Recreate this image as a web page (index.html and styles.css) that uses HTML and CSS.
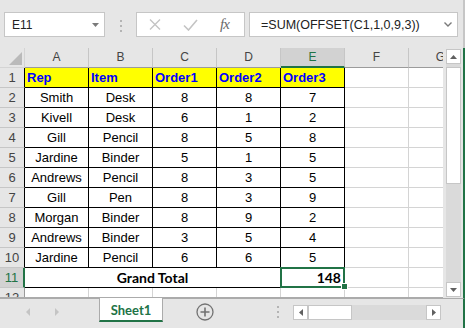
FILE: index.html
```html
<!DOCTYPE html>
<html lang="en">
<head>
  <meta charset="UTF-8" />
  <meta name="viewport" content="width=device-width, initial-scale=1.0" />
  <title>Sheet1</title>
  <link rel="stylesheet" href="styles.css">
</head>
<body>
  <div class="formula-row">
    <div class="name-box">
      <span>E11</span>
      <svg width="7" height="4" viewBox="0 0 7 4"><path d="M0 0h7L3.5 4z" fill="#7a7a7a"/></svg>
    </div>
    <div class="grip"><i></i><i></i><i></i></div>
    <div class="fx-buttons">
      <svg class="cancel" width="12" height="11" viewBox="0 0 12 11"><path d="M1 0.5l10 10M11 0.5l-10 10" stroke="#c4c4c4" stroke-width="1.4" fill="none"/></svg>
      <svg class="enter" width="15" height="12" viewBox="0 0 15 12"><path d="M1 6.5l4.5 4.5 8.5-10" stroke="#c4c4c4" stroke-width="1.6" fill="none"/></svg>
      <span class="fx">fx</span>
    </div>
    <div class="formula">
      <span>=SUM(OFFSET(C1,1,0,9,3))</span>
      <svg width="8" height="5" viewBox="0 0 8 5"><path d="M0.5 0.5l3.5 3.5 3.5-3.5" stroke="#7a7a7a" stroke-width="1.4" fill="none"/></svg>
    </div>
  </div>

  <div class="main">
    <div class="grid">
      <table class="sheet">
        <colgroup>
          <col class="col-rh"><col class="col"><col class="col"><col class="col"><col class="col"><col class="col"><col class="col"><col class="col">
        </colgroup>
        <thead>
          <tr>
            <th class="corner"><svg width="25" height="19" viewBox="0 0 25 19"><path d="M22 4v13H9z" fill="#bababa"/></svg></th>
            <th class="ch">A</th><th class="ch">B</th><th class="ch">C</th><th class="ch">D</th><th class="ch on">E</th><th class="ch">F</th><th class="ch">G</th>
          </tr>
        </thead>
        <tbody>
          <tr><th class="rh edge">1</th><td class="box hd">Rep</td><td class="box hd">Item</td><td class="box hd">Order1</td><td class="box hd">Order2</td><td class="box hd">Order3</td><td></td><td></td></tr>
          <tr><th class="rh edge">2</th><td class="box">Smith</td><td class="box">Desk</td><td class="box">8</td><td class="box">8</td><td class="box">7</td><td></td><td></td></tr>
          <tr><th class="rh edge">3</th><td class="box">Kivell</td><td class="box">Desk</td><td class="box">6</td><td class="box">1</td><td class="box">2</td><td></td><td></td></tr>
          <tr><th class="rh edge">4</th><td class="box">Gill</td><td class="box">Pencil</td><td class="box">8</td><td class="box">5</td><td class="box">8</td><td></td><td></td></tr>
          <tr><th class="rh edge">5</th><td class="box">Jardine</td><td class="box">Binder</td><td class="box">5</td><td class="box">1</td><td class="box">5</td><td></td><td></td></tr>
          <tr><th class="rh edge">6</th><td class="box">Andrews</td><td class="box">Pencil</td><td class="box">8</td><td class="box">3</td><td class="box">5</td><td></td><td></td></tr>
          <tr><th class="rh edge">7</th><td class="box">Gill</td><td class="box">Pen</td><td class="box">8</td><td class="box">3</td><td class="box">9</td><td></td><td></td></tr>
          <tr><th class="rh edge">8</th><td class="box">Morgan</td><td class="box">Binder</td><td class="box">8</td><td class="box">9</td><td class="box">2</td><td></td><td></td></tr>
          <tr><th class="rh edge">9</th><td class="box">Andrews</td><td class="box">Binder</td><td class="box">3</td><td class="box">5</td><td class="box">4</td><td></td><td></td></tr>
          <tr><th class="rh edge">10</th><td class="box">Jardine</td><td class="box">Pencil</td><td class="box">6</td><td class="box">6</td><td class="box">5</td><td></td><td></td></tr>
          <tr><th class="rh on">11</th><td class="box total" colspan="4">Grand Total</td><td class="box sum">148<span class="selection"></span><span class="handle"></span></td><td></td><td></td></tr>
          <tr><th class="rh">12</th><td></td><td></td><td></td><td></td><td></td><td></td><td></td></tr>
        </tbody>
      </table>
    </div>
    <div class="vscroll">
      <div class="sb-btn"><svg width="7" height="4" viewBox="0 0 7 4"><path d="M0 4h7L3.5 0z" fill="#606060"/></svg></div>
      <div class="sb-track"><div class="sb-thumb"></div></div>
      <div class="sb-btn"><svg width="7" height="4" viewBox="0 0 7 4"><path d="M0 0h7L3.5 4z" fill="#606060"/></svg></div>
    </div>
  </div>

  <div class="tabs">
    <svg class="tab-nav" width="99" height="29" viewBox="0 0 99 29">
      <path d="M30 9v8l-4-4z" fill="#c4c4c4"/>
      <path d="M55 9v8l4-4z" fill="#c4c4c4"/>
    </svg>
    <div class="tab">Sheet1</div>
    <svg class="tab-add" width="18" height="18" viewBox="0 0 18 18">
      <circle cx="9" cy="9" r="8" stroke="#737373" stroke-width="1.3" fill="none"/>
      <path d="M9 4.5v9M4.5 9h9" stroke="#737373" stroke-width="1.6"/>
    </svg>
    <div class="hgrip"><i></i><i></i><i></i></div>
    <div class="hscroll">
      <div class="sb-btn"><svg width="4" height="7" viewBox="0 0 4 7"><path d="M4 0v7L0 3.5z" fill="#606060"/></svg></div>
      <div class="sb-thumb-h"></div>
      <div class="sb-track-h"></div>
      <div class="sb-btn"><svg width="4" height="7" viewBox="0 0 4 7"><path d="M0 0v7l4-3.5z" fill="#606060"/></svg></div>
    </div>
  </div>
</body>
</html>
```

FILE: styles.css
```css
body {
  margin: 0;
  width: 465px;
  height: 328px;
  overflow: hidden;
  background: #e6e6e6;
  font-family: 'Liberation Sans', Arial, sans-serif;
  color: #000;
}

/* formula bar */

.formula-row {
  display: flex;
  align-items: flex-start;
  height: 48px;
  box-sizing: border-box;
  padding: 12px 0 0 4px;
  border-right: 2px solid #c6c6c6;
}

.name-box,
.fx-buttons,
.formula {
  box-sizing: border-box;
  height: 25px;
  background: #fff;
  border: 1px solid #c6c6c6;
  display: flex;
  align-items: center;
}

.name-box {
  width: 101px;
  justify-content: space-between;
  padding: 0 5px 0 7px;
  font-size: 12px;
  color: #222;
}

.grip {
  width: 31px;
  display: flex;
  flex-direction: column;
  align-items: center;
  gap: 3px;
  padding-top: 8px;
}

.grip i,
.hgrip i {
  display: block;
  width: 2px;
  height: 2px;
  background: #b4b4b4;
}

.fx-buttons {
  width: 109px;
  padding-left: 12px;
}

.fx-buttons .enter {
  margin-left: 22px;
}

.fx {
  margin-left: 22px;
  font-family: 'Liberation Serif', serif;
  font-style: italic;
  font-size: 15px;
  color: #6a6a6a;
  letter-spacing: -1px;
}

.formula {
  width: 209px;
  margin-left: 4px;
  justify-content: space-between;
  padding: 0 5px 0 11px;
  font-size: 12.5px;
  color: #222;
}

/* grid */

.main {
  display: flex;
  height: 250px;
  border-right: 2px solid #217346;
}

.grid {
  width: 443px;
  flex: none;
  overflow: hidden;
  background: #fff;
  border-bottom: 1px solid #ababab;
  box-sizing: border-box;
}

.sheet {
  border-collapse: separate;
  border-spacing: 0;
  table-layout: fixed;
  width: 473px;
  font-size: 13px;
}

.col-rh { width: 25px; }
.col { width: 64px; }

.sheet th,
.sheet td {
  padding: 0;
  height: 19px;
  line-height: 19px;
  border-right: 1px solid #d4d4d4;
  border-bottom: 1px solid #d4d4d4;
  white-space: nowrap;
  overflow: hidden;
  text-align: center;
}

.sheet th {
  background: #e6e6e6;
  color: #444;
  font-weight: normal;
  font-size: 12px;
}

.sheet .corner svg {
  display: block;
}

.sheet .ch {
  border-right-color: #c6c6c6;
  border-bottom-color: #9b9b9b;
}

.sheet .ch.on {
  background: #d2d2d2;
  color: #217346;
  height: 18px;
  line-height: 18px;
  border-bottom: 2px solid #217346;
}

.sheet .rh {
  border-right-color: #9b9b9b;
  border-bottom-color: #c6c6c6;
  font-size: 13px;
}

.sheet .rh.edge {
  border-right-color: #000;
}

.sheet .rh.on {
  background: #d2d2d2;
  color: #217346;
  border-right: 2px solid #217346;
}

.sheet .box {
  border-right-color: #000;
  border-bottom-color: #000;
}

.sheet .hd {
  background: #ff0;
  color: #00f;
  font-weight: bold;
  text-align: left;
  padding-left: 2px;
}

.sheet .total,
.sheet .sum {
  font-family: Lato, 'Liberation Sans', sans-serif;
  font-weight: bold;
  font-size: 14px;
}

.sheet .sum {
  position: relative;
  overflow: visible;
  text-align: right;
  padding-right: 3px;
}

.selection {
  position: absolute;
  left: -1px;
  top: -1px;
  right: -1px;
  bottom: -1px;
  border: 2px solid #217346;
}

.handle {
  position: absolute;
  right: -4px;
  bottom: -3px;
  width: 5px;
  height: 5px;
  background: #217346;
  border: 1px solid #fff;
}

/* scrollbars */

.vscroll {
  width: 20px;
  flex: none;
  box-sizing: border-box;
  padding: 1px 2px 1px 3px;
  display: flex;
  flex-direction: column;
}

.sb-btn {
  box-sizing: border-box;
  width: 15px;
  height: 15px;
  background: #fff;
  border: 1px solid #c6c6c6;
  display: flex;
  align-items: center;
  justify-content: center;
}

.sb-track {
  flex: 1;
  background: #dadada;
  padding-top: 3px;
}

.sb-thumb {
  box-sizing: border-box;
  height: 117px;
  background: #fff;
  border: 1px solid #c6c6c6;
}

/* sheet tabs */

.tabs {
  display: flex;
  align-items: flex-start;
  height: 30px;
  box-sizing: border-box;
  border-top: 1px solid #ababab;
  border-right: 2px solid #217346;
}

.tab-nav {
  display: block;
}

.tab {
  box-sizing: border-box;
  width: 64px;
  height: 24px;
  margin-top: -1px;
  background: #fff;
  border-left: 1px solid #ababab;
  border-right: 1px solid #ababab;
  border-bottom: 2px solid #217346;
  text-align: center;
  line-height: 24px;
  font-family: Lato, 'Liberation Sans', sans-serif;
  font-weight: bold;
  font-size: 13px;
  color: #217346;
}

.tab-add {
  display: block;
  margin: 4px 0 0 33px;
}

.hgrip {
  display: flex;
  flex-direction: column;
  gap: 3px;
  margin: 7px 0 0 63px;
}

.hscroll {
  display: flex;
  width: 148px;
  margin: 6px 0 0 14px;
}

.sb-thumb-h {
  box-sizing: border-box;
  width: 44px;
  height: 15px;
  background: #fff;
  border: 1px solid #c6c6c6;
}

.sb-track-h {
  flex: 1;
  background: #dadada;
}
```
